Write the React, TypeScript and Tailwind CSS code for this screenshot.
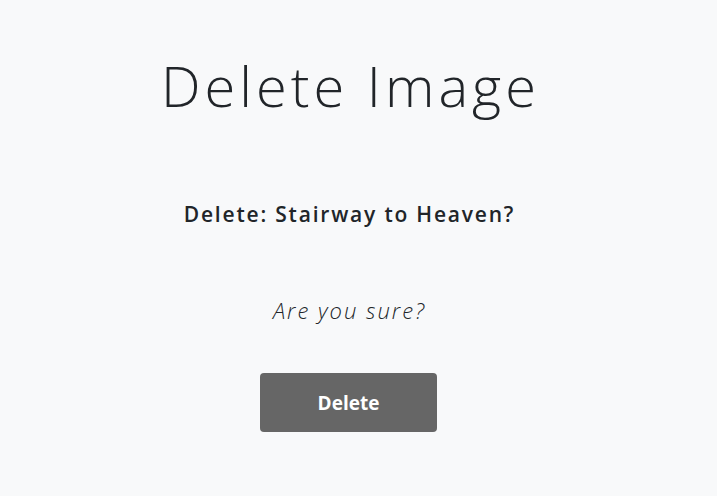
export default function App() {
  return (
    <div
      className="min-h-[496px] w-full bg-[#f8f9fa] text-[#212529]"
      style={{ fontFamily: '"Open Sans", "Noto Sans", sans-serif' }}
    >
      <div className="mx-auto flex w-[540px] -translate-x-[10px] flex-col items-center pt-[52px]">
        <h1 className="pl-[4px] text-[56px] font-light leading-[1.2] tracking-[4px]">Delete Image</h1>
        <h5 className="mt-[83px] pl-[2px] text-[21px] font-semibold leading-[1.2] tracking-[1.8px]">
          Delete: Stairway to Heaven?
        </h5>
        <p className="mt-[67px] pl-[2px] text-[22px] font-light italic leading-[1.5] tracking-[2px]">
          Are you sure?
        </p>
        <button
          className="mt-[46px] h-[59px] w-[177px] rounded-[4px] bg-[#666666] text-[19px] font-bold text-white"
          style={{ fontFamily: '"Open Sans", sans-serif' }}
        >
          Delete
        </button>
      </div>
    </div>
  );
}
